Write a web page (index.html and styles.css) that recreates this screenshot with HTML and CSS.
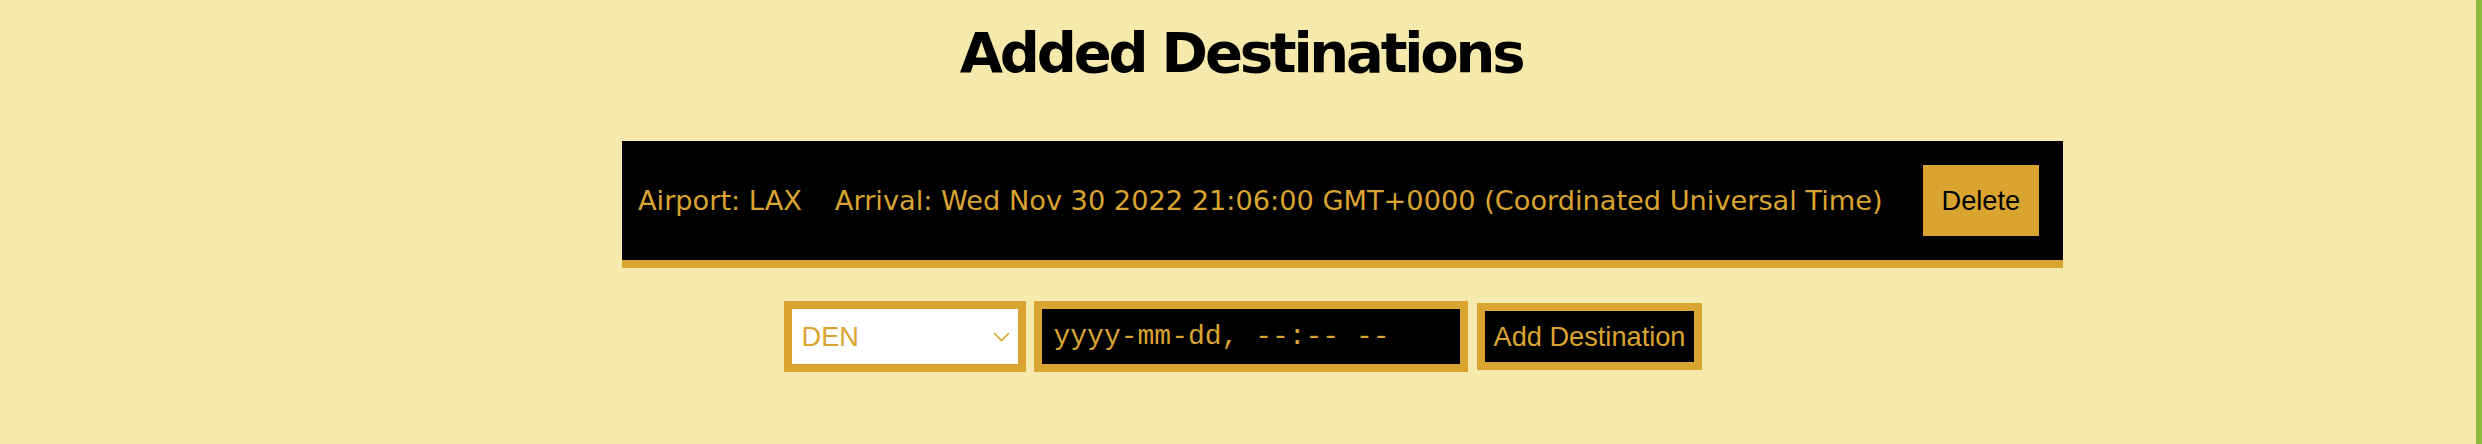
FILE: index.html
```html
<!DOCTYPE html>
<html lang="en">
<head>
<meta charset="utf-8">
<title>Added Destinations</title>
<link rel="stylesheet" href="styles.css">
</head>
<body>
  <h1 class="title">Added Destinations</h1>
  <div class="dest">
    <div class="dest-info">
      <span>Airport: LAX</span>
      <span>Arrival: Wed Nov 30 2022 21:06:00 GMT+0000 (Coordinated Universal Time)</span>
    </div>
    <button class="btn-delete">Delete</button>
  </div>
  <form class="add-row">
    <div class="select-wrap">
      <select class="airport">
        <option>DEN</option>
      </select>
      <svg class="chev" width="17" height="10" viewBox="0 0 17 10"><path d="M1 1 L8.5 8.5 L16 1" fill="none" stroke="#daa431" stroke-width="1.6"/></svg>
    </div>
    <input class="date" type="text" placeholder="yyyy-mm-dd, --:-- --">
    <button type="button" class="btn-add">Add Destination</button>
  </form>
</body>
</html>
```
FILE: styles.css
```css
html, body {
  margin: 0;
  padding: 0;
}
body {
  background: #f5e9ab;
  min-height: 100vh;
  box-shadow: inset -6px 0 0 #8cba3c;
  font-family: "DejaVu Sans", sans-serif;
  overflow: hidden;
}
.title {
  margin: 20px 0 0;
  text-align: center;
  font-family: "DejaVu Sans", sans-serif;
  font-weight: bold;
  font-size: 56px;
  line-height: 65px;
  letter-spacing: -3.2px;
  color: #000;
}
.dest {
  display: flex;
  align-items: center;
  gap: 40px;
  width: fit-content;
  margin: 56px 0 0 622px;
  padding: 24px 24px 24px 16px;
  background: #000;
  border-bottom: 8px solid #daa431;
}
.dest-info {
  display: flex;
  gap: 33px;
  font-size: 27.2px;
  color: #daa431;
  white-space: nowrap;
}
.btn-delete {
  height: 71px;
  padding: 0 19px;
  border: none;
  background: #daa431;
  color: #000;
  font-family: "Liberation Sans", Arial, sans-serif;
  font-size: 27.2px;
}
.add-row {
  display: flex;
  justify-content: center;
  align-items: center;
  gap: 8px;
  margin: 33px 0 0;
  padding-left: 4px;
}
.select-wrap {
  position: relative;
  display: flex;
}
.airport {
  appearance: none;
  -webkit-appearance: none;
  width: 242px;
  height: 71px;
  box-sizing: border-box;
  border: 8px solid #daa431;
  border-radius: 0;
  background: #fff;
  color: #daa431;
  padding: 0 0 0 10px;
  font-family: "Liberation Sans", Arial, sans-serif;
  font-size: 27.2px;
  outline: none;
}
.chev {
  position: absolute;
  right: 16px;
  top: 31px;
  pointer-events: none;
}
.date {
  width: 434px;
  height: 71px;
  box-sizing: border-box;
  border: 8px solid #daa431;
  border-radius: 0;
  background: #000;
  color: #daa431;
  padding: 0 0 0 12px;
  font-family: "Liberation Mono", "Courier New", monospace;
  font-size: 28px;
  outline: none;
}
.date::placeholder {
  color: #daa431;
  opacity: 1;
}
.btn-add {
  margin-left: 1px;
  height: 67px;
  box-sizing: border-box;
  border: 8px solid #daa431;
  border-radius: 0;
  background: #000;
  color: #daa431;
  padding: 0 9px;
  font-family: "Liberation Sans", Arial, sans-serif;
  font-size: 27.2px;
}
```
